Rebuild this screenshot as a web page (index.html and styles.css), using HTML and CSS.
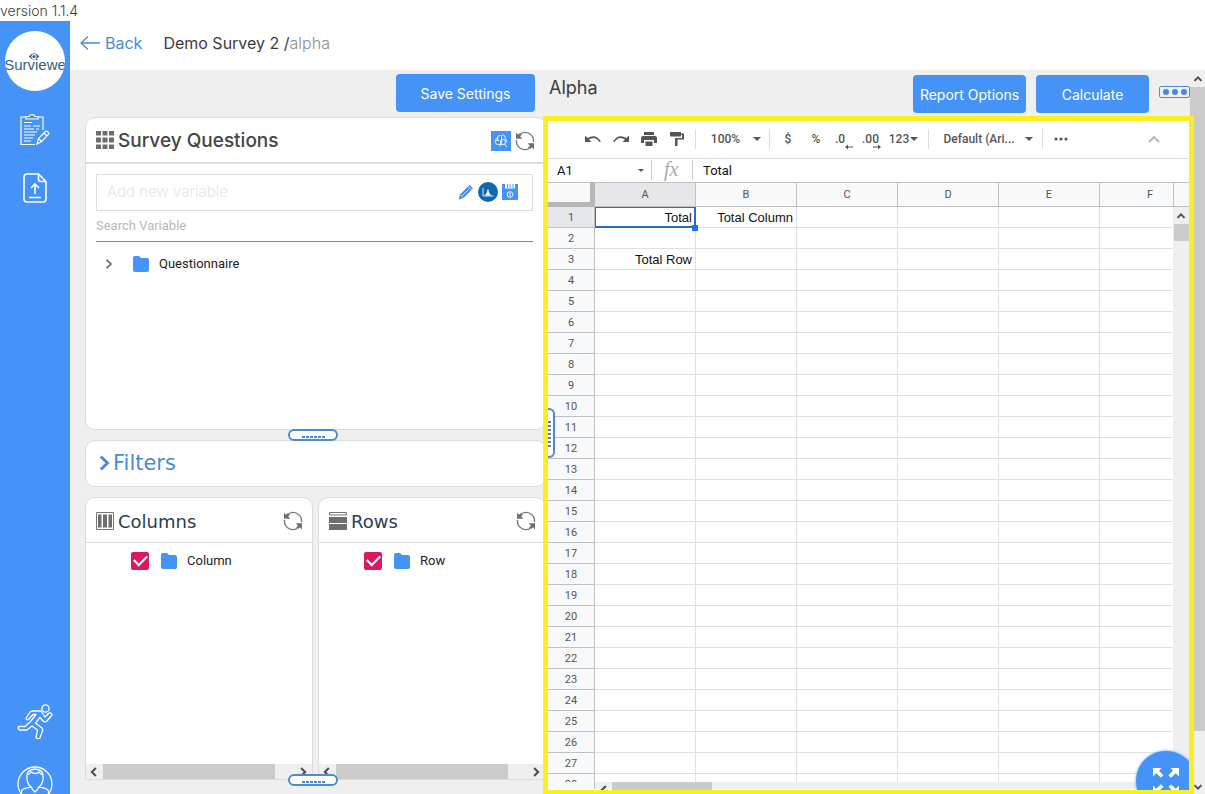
FILE: index.html
```html
<!DOCTYPE html>
<html lang="en">
<head>
<meta charset="utf-8">
<title>Surviewer</title>
<link rel="stylesheet" href="styles.css">
</head>
<body>
<svg class="defs" aria-hidden="true">
  <symbol id="refresh" viewBox="0 0 20 20"><g fill="none" stroke="#777" stroke-width="1.300"><path d="M5.500 2.800A8.400 8.400 0 0 1 18.400 11"/><path d="M14.500 17.200A8.400 8.400 0 0 1 1.600 9"/></g><path d="M1 1.500v6.200h6.200L5.200 5.300 7 3.500 4.500 2.200 3 3.800zM19 18.500v-6.200h-6.200l2 2.400L13 16.500l2.500 1.300L17 16.200z" fill="#6e6e6e"/></symbol>
  <symbol id="folder" viewBox="0 0 16 16"><path d="M2 0h4l2 2h6a2 2 0 0 1 2 2v10a2 2 0 0 1-2 2H2a2 2 0 0 1-2-2V2a2 2 0 0 1 2-2z" fill="#4593f7"/></symbol>
  <symbol id="left" viewBox="0 0 8 8"><path d="M5.500.8L2.300 4l3.200 3.200" fill="none" stroke="#505050" stroke-width="1.700"/></symbol>
  <symbol id="right" viewBox="0 0 8 8"><path d="M2.500.8L5.700 4 2.500 7.200" fill="none" stroke="#505050" stroke-width="1.700"/></symbol>
  <symbol id="up" viewBox="0 0 8 8"><path d="M1.200 5.500L4 2.700l2.800 2.800" fill="none" stroke="#505050" stroke-width="1.600"/></symbol>
  <symbol id="down" viewBox="0 0 8 8"><path d="M1.200 2.500L4 5.300l2.800-2.800" fill="none" stroke="#505050" stroke-width="1.600"/></symbol>
  <symbol id="caret" viewBox="0 0 8 4"><path d="M0 0h8L4 4z" fill="#555"/></symbol>
</svg>
<div class="version">version 1.1.4</div>
<div class="app">
  <nav class="sidebar">
    <a class="logo" href="#" aria-label="Surviewer home">
      <svg class="eye" viewBox="0 0 12 8"><path d="M0 4Q6-3.500 12 4 6 11 0 4z" fill="#2f637f"/><circle cx="6" cy="4" r="3" fill="#fff"/><circle cx="6" cy="4" r="1.800" fill="#2f637f"/></svg>
      <span>Surviewe</span>
    </a>
    <a class="nav-item" href="#" aria-label="Surveys"><svg width="30" height="32" viewBox="0 0 30 32" fill="none" stroke="#fff" stroke-width="1.200"><path d="M6 3H1v27.500h14M17.500 3H23v13M6 2.500h3Q9.500.7 12 .7t3 1.800h3V5H6zM4 8.500h8M4 12h7M13 12h7M4 15h10M16 15h3M4 18h13M4 21h11M4 24h9M4 27h7M17 30l1.500-5.500 7-7q1-.8 2 .2l1 1q.8 1-.2 2l-7 7zM18.500 24.500l3 3M24 19l3 3"/></svg></a>
    <a class="nav-item" href="#" aria-label="Upload"><svg width="24" height="30" viewBox="0 0 24 30" fill="none" stroke="#fff" stroke-width="1.600"><path d="M15.500 1H4Q1 1 1 4v22q0 3 3 3h16q3 0 3-3V8.500zM15.500 1v5q0 2.500 2.500 2.500h5M12 21V11M8 15l4-4 4 4M6 24.500h12"/></svg></a>
    <span class="grow"></span>
    <a class="nav-item runner" href="#" aria-label="Run"><svg width="36" height="36" viewBox="0 0 36 36" fill="none" stroke="#fff" stroke-width="1.300" stroke-linejoin="round"><circle cx="28.500" cy="4.500" r="3.600"/><path d="M16 7h8l4 6 4-4q3-.5 3 2l-5.500 6.500q-2 .8-3.500-.5L23 13.500l-4.500 5.500 6.500 5q1 1 .5 2.500L23 34q-3 1.500-4-.5l1.500-7.500-5.500-4-5 4H2.500Q.5 24.500 1.500 22.500h6.500l5.500-5 5.500-7h-3l-4.500 5q-2 1-2.500-1L13 8q1.500-1 3-1z"/></svg></a>
    <a class="nav-item user" href="#" aria-label="Profile"><svg width="36" height="36" viewBox="0 0 36 36" fill="none" stroke="#fff" stroke-width="1.300"><circle cx="18" cy="18" r="17"/><path d="M10 9q0-5 8-6 8 1 8 6 1 9-5 13v1l-3 3-3-3v-1Q9 18 10 9zM10 9q3-1 4-3 5 3 8 0 1 2 4 3M4.500 28V25q1-3 10.500-4M31.500 28V25q-1-3-10.500-4"/></svg></a>
  </nav>
  <div class="main">
    <header class="crumbs">
      <a class="back" href="#"><svg width="20" height="14" viewBox="0 0 20 14" fill="none" stroke="#4a8bd4" stroke-width="1.300"><path d="M20 7H1M8 .6L1 7l7 6.400"/></svg>Back</a>
      <span class="path">Demo Survey 2 /<span class="muted">alpha</span></span>
    </header>
    <div class="workspace">
      <section class="left">
        <div class="save-row"><button class="btn save">Save Settings</button></div>
        <div class="card questions">
          <div class="card-head thick">
            <svg width="18" height="18" viewBox="0 0 18 18" fill="#6e6e6e"><path d="M0 0h5v4.500H0zM6.500 0h5v4.500h-5zM13 0h5v4.500h-5zM0 6.500h5v5H0zM6.500 6.500h5v5h-5zM13 6.500h5v5h-5zM0 13.500h5V18H0zM6.500 13.500h5V18h-5zM13 13.500h5V18h-5z"/></svg>
            <h2>Survey Questions</h2>
            <button class="icon brain" aria-label="Analyse"><svg width="20" height="20" viewBox="0 0 20 20" fill="none" stroke="#fff" stroke-width=".9"><path d="M9.500 4.500Q6.500 4 6.500 7 3.500 8 4 11q1 3 3.500 2.500 2.500 1 3-2V5.500q0-2 2-1.500 2 .5 1.500 3 2.500 2 1 4.500M6.500 7Q6 9 8 9.500H5"/><circle cx="12" cy="11" r="2.600"/><path d="M13.500 13l2.500 3M10 13l-1 2.500"/></svg></button>
            <button class="icon" aria-label="Refresh questions"><svg width="20" height="20"><use href="#refresh"/></svg></button>
          </div>
          <div class="card-body">
            <div class="field">
              <input type="text" aria-label="Add new variable" placeholder="Add new variable">
              <button class="icon" aria-label="Edit"><svg width="16" height="16" viewBox="0 0 16 16"><path d="M.5 15.500L2 10.500 11.500 1l3.500 3.500-9.500 9.500z" fill="#4a8bd4"/><path d="M2.500 11l2.500 2.500M4.500 11.500l6-6M10 2.500L13.500 6" stroke="#fff" stroke-width=".8" fill="none"/></svg></button>
              <button class="icon" aria-label="Distribution"><svg width="20" height="20" viewBox="0 0 20 20"><circle cx="10" cy="10" r="10" fill="#1167b0"/><path d="M5 6v8h10.500" stroke="#fff" stroke-width=".8" fill="none"/><path d="M6 13.500q3-1 3.500-6h1q.5 5 3.500 6z" fill="#fff"/></svg></button>
              <button class="icon" aria-label="Save variable"><svg width="16" height="16" viewBox="0 0 16 16"><path d="M0 0h16v16H0z" fill="#4593f7"/><path d="M3 0h10v4.500H3z" fill="#fff"/><path d="M5.500 0v4M8 0v4M11 0v4" stroke="#4593f7"/><circle cx="8" cy="10.500" r="2.800" stroke="#fff" fill="none"/><path d="M8 9v3" stroke="#fff"/></svg></button>
            </div>
            <input class="search" type="text" aria-label="Search Variable" placeholder="Search Variable">
            <div class="tree-row">
              <button class="icon expand" aria-label="Expand"><svg width="8" height="10" viewBox="0 0 8 10" fill="none" stroke="#666" stroke-width="1.600"><path d="M1.500.8L6 5 1.500 9.200"/></svg></button>
              <svg width="16" height="16"><use href="#folder"/></svg><span>Questionnaire</span>
            </div>
          </div>
          <span class="grip"></span>
        </div>
        <button class="card filters"><svg width="12" height="16" viewBox="0 0 12 16" fill="none" stroke="#4a8bd4" stroke-width="3"><path d="M1.800 1.500L8.500 8l-6.700 6.500"/></svg>Filters</button>
        <div class="axes">
          <div class="card axis">
            <div class="card-head">
              <svg width="18" height="18" viewBox="0 0 18 18"><path d="M.5.5h17v17H.5z" fill="#fff" stroke="#777"/><path d="M2 2.500h3.500v13H2zM7 2.500h4v13H7zM12.500 2.500H16v13h-3.500z" fill="#6e6e6e"/></svg>
              <h2>Columns</h2>
              <button class="icon" aria-label="Refresh columns"><svg width="20" height="20"><use href="#refresh"/></svg></button>
            </div>
            <label class="check-row"><input type="checkbox" checked><svg width="16" height="16"><use href="#folder"/></svg><span>Column</span></label>
            <div class="hbar"><svg width="10" height="10"><use href="#left"/></svg><span class="track"><i></i></span><svg width="10" height="10"><use href="#right"/></svg></div>
          </div>
          <div class="card axis">
            <div class="card-head">
              <svg width="18" height="18" viewBox="0 0 18 18"><path d="M.5.5h17v2.500H.5z" fill="#fff" stroke="#777"/><path d="M0 5h18v6H0zM0 12h18v6H0z" fill="#6e6e6e"/></svg>
              <h2>Rows</h2>
              <button class="icon" aria-label="Refresh rows"><svg width="20" height="20"><use href="#refresh"/></svg></button>
            </div>
            <label class="check-row"><input type="checkbox" checked><svg width="16" height="16"><use href="#folder"/></svg><span>Row</span></label>
            <div class="hbar"><svg width="10" height="10"><use href="#left"/></svg><span class="track"><i></i></span><svg width="10" height="10"><use href="#right"/></svg></div>
          </div>
          <span class="grip"></span>
        </div>
      </section>
      <section class="right">
        <div class="report-head">
          <h1>Alpha</h1>
          <button class="btn">Report Options</button>
          <button class="btn">Calculate</button>
          <button class="more" aria-label="More"><i></i><i></i><i></i></button>
        </div>
        <div class="sheet">
          <div class="toolbar">
            <button class="tool" aria-label="Undo"><svg width="16" height="8" viewBox="0 0 16 8"><path d="M0 .5v6.500h6.500L4 4.500Q10 .5 14.500 7l1.500-.6Q10.500-2 2.600 3z" fill="#555"/></svg></button>
            <button class="tool" aria-label="Redo"><svg width="16" height="8" viewBox="0 0 16 8"><path d="M16 .5v6.500H9.500L12 4.500Q6 .5 1.500 7L0 6.400Q5.500-2 13.400 3z" fill="#555"/></svg></button>
            <button class="tool" aria-label="Print"><svg width="16" height="14" viewBox="0 0 16 14"><path d="M3 0h10v3H3zM2 4h12q2 0 2 2v5h-3V8H3v3H0V6q0-2 2-2zM4.500 9.500h7V14h-7z" fill="#555"/></svg></button>
            <button class="tool" aria-label="Paint format"><svg width="14" height="14" viewBox="0 0 14 14"><path d="M0 0h11v1.500h3v6H7.500V14H5V6h7V3h-1v1.500H0z" fill="#555"/></svg></button>
            <span class="sep"></span>
            <button class="tool zoom">100%<svg width="8" height="4"><use href="#caret"/></svg></button>
            <span class="sep"></span>
            <button class="tool">$</button>
            <button class="tool">%</button>
            <button class="tool dec one">.0<svg width="8" height="6" viewBox="0 0 8 6"><path d="M8 2.500H3V.5L0 3l3 2.500v-2h5z" fill="#555"/></svg></button>
            <button class="tool dec">.00<svg width="8" height="6" viewBox="0 0 8 6"><path d="M0 2.500h5V.5L8 3 5 5.500v-2H0z" fill="#555"/></svg></button>
            <button class="tool num">123<svg width="8" height="4"><use href="#caret"/></svg></button>
            <span class="sep"></span>
            <button class="tool font">Default (Ari...<svg width="8" height="4"><use href="#caret"/></svg></button>
            <span class="sep"></span>
            <button class="tool dots" aria-label="More tools"><svg width="14" height="4" viewBox="0 0 14 4" fill="#555"><circle cx="2" cy="2" r="1.600"/><circle cx="7" cy="2" r="1.600"/><circle cx="12" cy="2" r="1.600"/></svg></button>
            <button class="tool collapse" aria-label="Hide menus"><svg width="12" height="8" viewBox="0 0 12 8" fill="none" stroke="#bbb" stroke-width="2"><path d="M1 7l5-5 5 5"/></svg></button>
          </div>
          <div class="formula">
            <button class="cell-name">A1<svg width="6" height="3"><use href="#caret"/></svg></button>
            <span class="fx">fx</span>
            <input type="text" aria-label="Formula" value="Total">
          </div>
          <div class="grid">
            <div class="clip"><table>
              <thead><tr><th class="corner"></th><th class="on">A</th><th>B</th><th>C</th><th>D</th><th>E</th><th>F</th></tr></thead>
              <tbody id="rows"></tbody>
            </table></div>
            <div class="vbar"><span class="cap"></span><svg width="10" height="10"><use href="#up"/></svg><i></i></div>
          </div>
          <div class="sheet-foot"><span class="foot-head"></span><svg width="10" height="10"><use href="#left"/></svg><i></i></div>
          <button class="fab" aria-label="Full screen"><svg width="26" height="26" viewBox="0 0 26 26" fill="#fff"><path id="arr" d="M0 0h8.500L6 2.700l4.500 4.500-2.500 2.500L3.300 5.200 0 8.500z"/><use href="#arr" transform="translate(26) scale(-1 1)"/><use href="#arr" transform="translate(0 26) scale(1 -1)"/><use href="#arr" transform="translate(26 26) scale(-1)"/></svg></button>
          <span class="side-grip"></span>
        </div>
      </section>
      <div class="page-bar"><svg width="10" height="10"><use href="#up"/></svg><span><i></i></span><svg width="10" height="10"><use href="#down"/></svg></div>
    </div>
  </div>
</div>
<script src="rows.js"></script>
</body>
</html>
```
FILE: styles.css
```css
* { box-sizing: border-box; }
body { margin: 0; height: 100vh; overflow: hidden; display: flex; flex-direction: column; background: #fff; color: #3c3c3c; font-family: Inter, "Open Sans", sans-serif; }
button { font: inherit; color: inherit; border: 0; background: none; padding: 0; }
input { font: inherit; color: inherit; border: 0; outline: 0; min-width: 0; background: none; padding: 0; }
a { text-decoration: none; color: inherit; }
svg { display: block; flex: none; }
i { display: block; }
h1, h2 { margin: 0; font-weight: 500; }
.defs { position: absolute; width: 0; height: 0; }
.version { height: 21px; flex: none; line-height: 21px; font-size: 14px; font-weight: 300; }
.app { flex: 1; min-height: 0; display: flex; }

.sidebar { width: 70px; flex: none; background: #4593f7; display: flex; flex-direction: column; align-items: center; padding-top: 10px; overflow: hidden; }
.logo { width: 60px; height: 60px; flex: none; margin-bottom: 23px; border-radius: 50%; background: #fff; overflow: hidden; position: relative; display: flex; align-items: center; justify-content: center; color: #2f637f; font-family: "Liberation Sans", sans-serif; font-size: 15px; }
.logo span { margin: 6px 0 0; }
.eye { position: absolute; left: 23px; top: 22px; width: 12px; height: 7px; }
.nav-item { flex: none; margin-bottom: 27px; }
.runner { margin-bottom: 26px; }
.user { margin-bottom: -8px; }
.grow { flex: 1; }

.main { flex: 1; min-width: 0; display: flex; flex-direction: column; }
.crumbs { height: 49px; flex: none; display: flex; align-items: center; gap: 21px; padding: 0 10px 5px; font-size: 16px; }
.back { display: flex; align-items: center; gap: 5px; color: #4a8bd4; }
.path { font-size: 16px; }
.muted { color: #8c8c8c; font-weight: 300; }
.workspace { flex: 1; min-height: 0; display: grid; grid-template-columns: minmax(0, 473fr) minmax(0, 647fr) 15px; background: #efefef; }

.btn { height: 38px; border-radius: 4px; background: #4593f7; color: #fff; font-size: 14px; }
.left { margin-right: -3px; padding: 4px 0 14px 15px; display: flex; flex-direction: column; min-height: 0; }
.save-row { display: flex; justify-content: flex-end; padding-right: 11px; margin-bottom: 5px; }
.save { width: 139px; }
.card { background: #fff; border: 1px solid #dcdcdc; border-radius: 10px; position: relative; }
.card-head { height: 45px; flex: none; display: flex; align-items: center; gap: 4px; padding: 3px 9px 0 10px; border-bottom: 1px solid #dcdcdc; }
.card-head h2 { flex: 1; font-family: "DejaVu Sans", sans-serif; font-weight: 400; font-size: 18px; color: #2c3e50; }
.thick { border-bottom-width: 2px; height: 46px; padding-top: 0; padding-right: 10px; }
.thick .icon { margin-top: 2px; }
.thick h2 { font-family: Inter, sans-serif; font-weight: 500; font-size: 19px; color: #444; }
.brain { background: #4593f7; }
.questions { flex: 312 1 0; display: flex; flex-direction: column; }
.card-body { padding: 10px 12px 0 10px; }
.field { height: 37px; border: 1px solid #dcdcdc; display: flex; align-items: center; gap: 4px; padding: 0 14px 2px 10px; }
.field input { flex: 1; font-size: 15px; font-weight: 300; }
.field input::placeholder { color: #e6e6e6; opacity: 1; }
.search { display: block; width: 100%; height: 31px; padding-bottom: 2px; border-bottom: 1px solid #888; font: 13px Roboto, sans-serif; }
.search::placeholder { color: #b8b8b8; opacity: 1; }
.tree-row { display: flex; align-items: center; height: 43px; font: 13px Roboto, sans-serif; color: #222; }
.expand { margin: 0 20px 0 9px; }
.tree-row span, .check-row span { margin-left: 10px; }
.grip { position: absolute; z-index: 2; bottom: -12px; left: 50%; margin-left: -28px; width: 50px; height: 12px; border: 2px solid #4a8bd4; border-radius: 6px; background: #fff; }
.grip::after { content: ""; position: absolute; left: 12px; right: 11px; bottom: 1px; height: 2px; background: repeating-linear-gradient(90deg, #4a8bd4 0 3px, #fff 3px 4px); }
.filters { margin: 10px 0; height: 47px; flex: none; display: flex; align-items: center; gap: 2px; padding: 0 13px; font: 21px "DejaVu Sans", sans-serif; color: #4a8bd4; }
.axes { flex: 284 1 0; min-height: 0; display: flex; gap: 5px; position: relative; }
.axes .grip { bottom: -6px; }
.axis { flex: 1; display: flex; flex-direction: column; border-radius: 10px 10px 0 0; }
.check-row { flex: 1; display: flex; align-items: flex-start; padding: 8px 0 0 45px; font: 13px/20px Roboto, sans-serif; color: #222; }
.check-row svg { margin: 2px 0 0 12px; }
.check-row input { appearance: none; margin: 1px 0 0; width: 18px; height: 18px; border-radius: 2px; background: #d81b60; display: grid; place-items: center; }
.check-row input::after { content: ""; width: 11px; height: 6px; margin-top: -3px; border: solid #fff; border-width: 0 0 2px 2px; transform: rotate(-45deg); }
.hbar { display: flex; align-items: center; justify-content: space-between; height: 15px; background: #efefef; padding: 0 4px 0 3px; }
.track { flex: 1; height: 15px; margin: 0 4px; }
.track i { width: 90%; height: 15px; background: #cbcbcb; }

.right { display: flex; flex-direction: column; min-height: 0; }
.report-head { height: 46px; flex: none; display: flex; gap: 10px; padding: 5px 0 0 6px; }
.report-head h1 { flex: 1; font-size: 18px; line-height: 26px; font-weight: 400; }
.report-head .btn { width: 113px; }
.more { width: 31px; height: 12px; margin-top: 11px; border: 1px solid #4a8bd4; border-radius: 2px; display: flex; justify-content: center; align-items: center; gap: 3px; }
.more i { width: 6px; height: 6px; border-radius: 50%; background: #4a8bd4; }
.sheet { position: relative; flex: 1; min-height: 0; margin-right: -4px; padding: 5px; background: #fff; display: flex; flex-direction: column; overflow: hidden; font-family: Roboto, sans-serif; z-index: 1; }
.sheet::after { content: ""; position: absolute; z-index: 3; inset: 0; border: 5px solid #faf01e; border-bottom-width: 4px; pointer-events: none; }
.toolbar { height: 38px; flex: none; display: flex; align-items: center; padding: 0 0 2px 31px; border-bottom: 1px solid #dcdcdc; color: #555; font-size: 12px; font-weight: 500; }
.tool { width: 28px; height: 28px; display: flex; align-items: center; justify-content: center; }
.sep { width: 1px; height: 20px; background: #dcdcdc; margin: 0 4px; }
.zoom { width: 65px; gap: 13px; padding-left: 7px; }
.dec { position: relative; padding-right: 3px; }
.dec.one { padding-right: 8px; }
.dec svg { position: absolute; right: 5px; bottom: 3px; }
.num { width: 38px; gap: 1px; padding-right: 3px; }
.font { width: 105px; gap: 10px; padding-left: 5px; }
.collapse { margin-left: auto; margin-right: 21px; }
.formula { height: 23px; flex: none; display: flex; align-items: center; color: #111; font: 13px Roboto, sans-serif; }
.cell-name { width: 104px; height: 19px; display: flex; align-items: center; justify-content: space-between; padding: 0 7px 0 9px; border-right: 1px solid #ccc; }
.fx { width: 41px; height: 19px; line-height: 16px; padding-left: 12px; border-right: 1px solid #ccc; font-family: "Liberation Serif", serif; font-style: italic; font-size: 20px; color: #aaa; }
.formula input { flex: 1; padding-left: 10px; }
.grid { flex: 1; min-height: 0; display: flex; }
.clip { flex: 1; min-width: 0; overflow: hidden; }
table { table-layout: fixed; width: 653px; border-collapse: separate; border-spacing: 0; }
th { width: 101px; height: 25px; padding: 0; background: #f8f9fa; border: solid #c0c0c0; border-width: 1px 1px 1px 0; font-size: 11px; font-weight: 400; color: #555; }
th.corner { width: 47px; border-right: 5px solid #b7b7b7; border-bottom: 5px solid #b7b7b7; }
tbody th { width: 47px; height: 21px; border-top: 0; }
th.on { background: #e6e7ea; }
td { height: 21px; padding: 1px 3px 0 0; border: solid #e0e0e0; border-width: 0 1px 1px 0; text-align: right; font: 13px/19px "Liberation Sans", sans-serif; color: #111; white-space: nowrap; }
td.active { position: relative; box-shadow: inset 0 0 0 1px #2a6cc4; border-color: #2a6cc4; }
td.active::after { content: ""; position: absolute; right: -3px; bottom: -4px; width: 6px; height: 6px; background: #1a73e8; z-index: 1; }
.vbar { width: 16px; flex: none; background: #efefef; display: flex; flex-direction: column; align-items: center; }
.cap { width: 100%; height: 25px; background: #f8f9fa; border: solid #c0c0c0; border-width: 1px 0 1px 1px; margin-bottom: 4px; }
.vbar i { width: 15px; height: 17px; margin-top: 3px; background: #cbcbcb; }
.sheet-foot { height: 7px; flex: none; display: flex; background: #efefef; }
.foot-head { width: 47px; background: #f8f9fa; border: solid #c0c0c0; border-width: 0 1px 0 0; }
.sheet-foot svg { margin: 3px 3px 0 4px; }
.sheet-foot i { width: 100px; height: 15px; background: #cbcbcb; }
.fab { position: absolute; right: -2px; bottom: -17px; width: 60px; height: 60px; border-radius: 50%; background: #4593f7; display: grid; place-items: center; box-shadow: 0 0 3px #4593f7; }
.side-grip { position: absolute; z-index: 1; left: 3px; top: 292px; width: 9px; height: 50px; border: 2px solid #4a8bd4; border-left: 0; border-radius: 0 6px 6px 0; background: #fff; }
.side-grip::after { content: ""; position: absolute; left: 2px; top: 11px; bottom: 9px; width: 3px; background: repeating-linear-gradient(#5f7f9f 0 2px, #fff 2px 4px); }
.page-bar { display: flex; flex-direction: column; align-items: center; padding: 4px 0 2px; background: #efefef; }
.page-bar span { flex: 1; width: 100%; margin: 3px 0; }
.page-bar i { height: 93%; background: #cbcbcb; }
```
FILE: rows.js
```js
const values = { 1: ['Total', 'Total Column'], 3: ['Total Row'] };
const body = document.getElementById('rows');
for (let r = 1; r <= 28; r++) {
  const tr = body.insertRow();
  const th = document.createElement('th');
  th.textContent = r;
  if (r === 1) th.className = 'on';
  tr.append(th);
  for (let c = 0; c < 6; c++) {
    const td = tr.insertCell();
    td.textContent = (values[r] || [])[c] || '';
    if (r === 1 && c === 0) td.className = 'active';
  }
}
```
